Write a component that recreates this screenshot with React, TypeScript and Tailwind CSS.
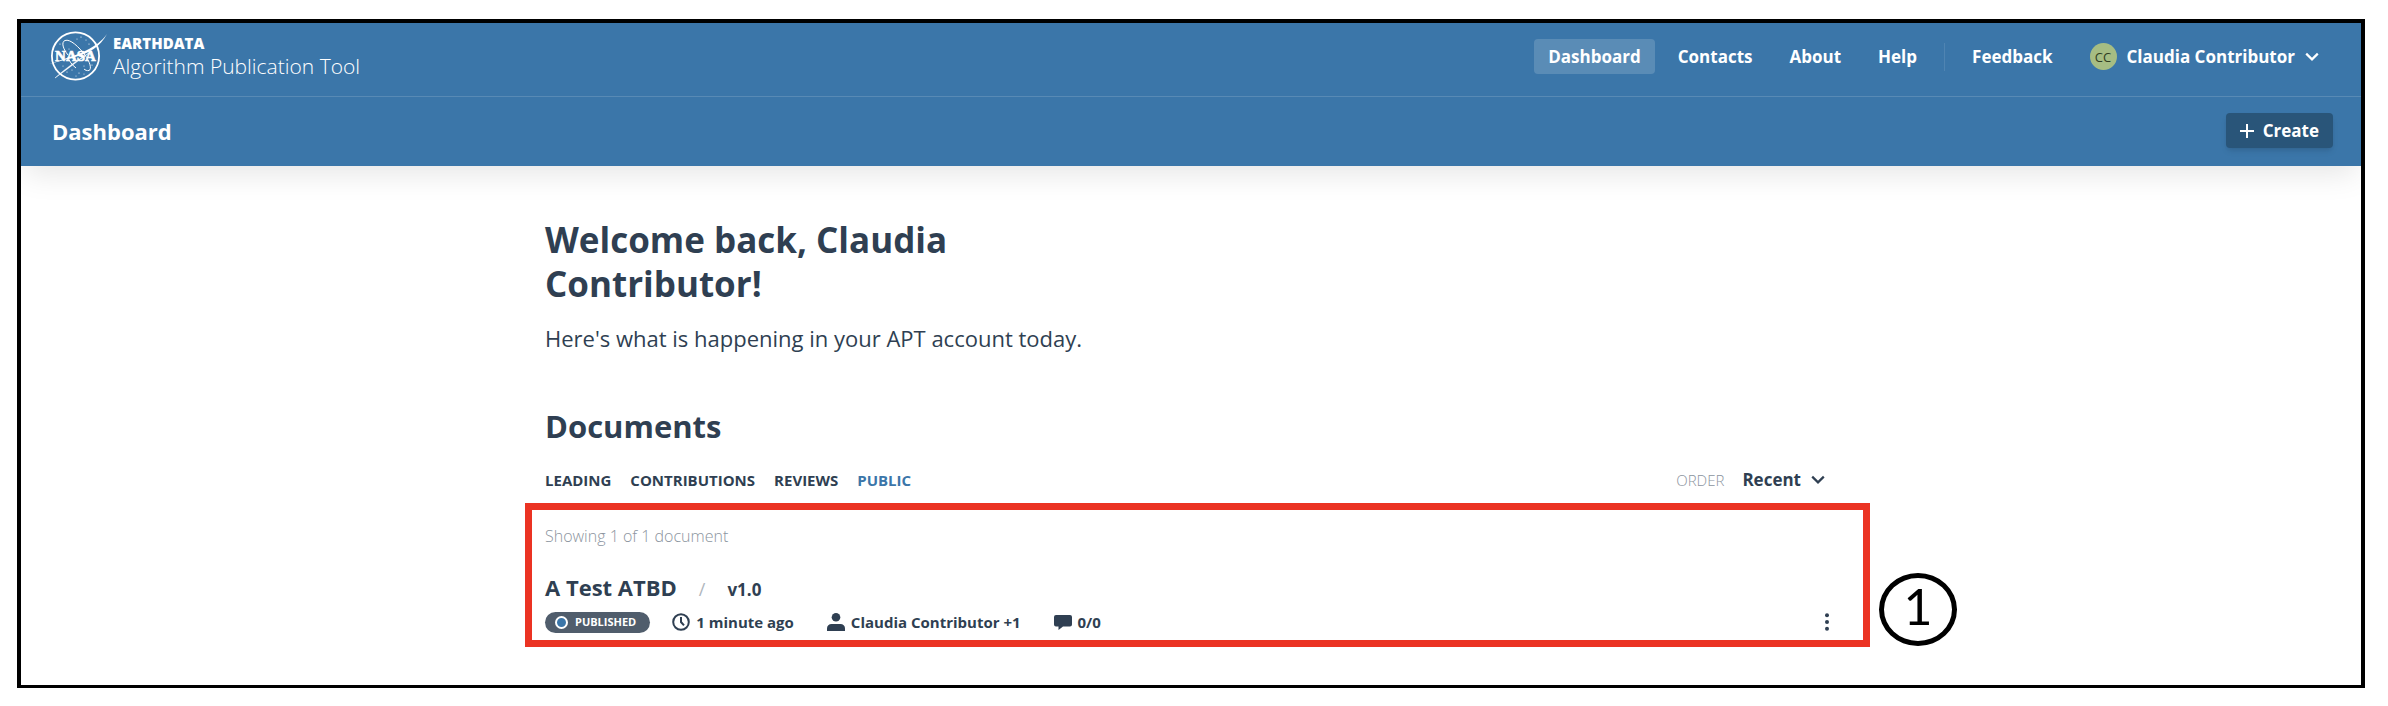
import type { ReactNode } from "react";

const navItem =
  "flex h-[35px] items-center rounded px-[14px] text-[17px] leading-6 font-bold whitespace-nowrap";

function NasaLogo() {
  return (
    <svg
      viewBox="0 0 60 52"
      className="h-[52px] w-[60px] shrink-0"
      fill="none"
      stroke="#fff"
      aria-hidden="true"
    >
      <circle cx="27.5" cy="26" r="23.6" strokeWidth="1.8" />
      <path
        d="M20 25C15 19 13 12 17 10.500C22 8.500 31 17 37 25C42 32 44 39 41 40.500C39 41 37 40 36 39"
        strokeWidth="1"
      />
      <path d="M20 27C21 31 24 35 28 38" strokeWidth="1" />
      <path d="M59 4C52 17 42 23 24 28L1 34C18 28 30 25 39 20C47 16 54 11 59 4Z" fill="#fff" stroke="none" />
      <path d="M7 48C17 39 29 30 44 21L30 31C22 37 14 43 7 48Z" fill="#fff" strokeWidth="0.5" />
      <g fill="#fff" stroke="none">
        <circle cx="33" cy="7" r="0.6" />
        <circle cx="38" cy="10" r="0.5" />
        <circle cx="41" cy="14" r="0.6" />
        <circle cx="29" cy="9" r="0.5" />
        <circle cx="12" cy="14" r="0.6" />
        <circle cx="21" cy="19" r="0.5" />
        <circle cx="15" cy="36" r="0.5" />
        <circle cx="19" cy="42" r="0.6" />
        <circle cx="24" cy="40" r="0.5" />
        <circle cx="31" cy="43" r="0.6" />
        <circle cx="36" cy="36" r="0.5" />
        <circle cx="44" cy="35" r="0.6" />
        <circle cx="28" cy="46" r="0.5" />
        <circle cx="36" cy="44" r="0.5" />
      </g>
      <text
        x="27.5"
        y="31"
        textAnchor="middle"
        fontFamily="Liberation Serif, serif"
        fontWeight="700"
        fontSize="15"
        fill="#fff"
        strokeWidth="0.6"
      >
        NASA
      </text>
    </svg>
  );
}

function Chevron() {
  return (
    <svg viewBox="0 0 14 10" className="h-[10px] w-[14px] shrink-0" fill="none" stroke="currentColor" strokeWidth="2.2" aria-hidden="true">
      <path d="M1.200 1.600 7 7.400l5.800-5.800" />
    </svg>
  );
}

function Meta({ icon, children }: { icon: ReactNode; children: ReactNode }) {
  return (
    <li className="flex items-center gap-[6px]">
      {icon}
      <span>{children}</span>
    </li>
  );
}

function Header() {
  return (
    <header className="relative bg-[#3b76a9] text-white shadow-[0_12px_28px_-4px_rgba(0,0,0,0.1)]">
      <div className="flex h-[74px] items-start justify-between border-b border-white/15 pr-7 pl-[27px]">
        <a href="#home" className="flex items-start pt-[7px]">
          <NasaLogo />
          <span className="flex flex-col pt-1 pl-[5px]">
            <strong className="text-[15px] leading-[18px] font-extrabold">EARTHDATA</strong>
            <span className="text-[21px] leading-7 font-light whitespace-nowrap">Algorithm Publication Tool</span>
          </span>
        </a>
        <nav aria-label="Main" className="flex items-center gap-[9px] pt-4">
          <a href="#dashboard" aria-current="page" className={`${navItem} bg-white/16`}>Dashboard</a>
          <a href="#contacts" className={navItem}>Contacts</a>
          <a href="#about" className={navItem}>About</a>
          <a href="#help" className={navItem}>Help</a>
          <span className="mx-1 h-7 w-px bg-white/10" />
          <a href="#feedback" className={navItem}>Feedback</a>
          <button type="button" className={`${navItem} gap-[10px]`}>
            <span className="flex size-[27px] items-center justify-center rounded-full bg-[#a6bd83] text-[13px] font-medium text-[#2f3d22]">CC</span>
            Claudia Contributor
            <Chevron />
          </button>
        </nav>
      </div>
      <div className="flex h-[69px] items-start justify-between pr-7 pl-[31px]">
        <h1 className="pt-[18px] text-[22px] leading-8 font-bold">Dashboard</h1>
        <button type="button" className="mt-4 flex h-[35px] items-center gap-[9px] rounded bg-[#295579] px-[14px] text-[17px] leading-6 font-bold shadow-md">
          <svg viewBox="0 0 14 14" className="size-[14px]" stroke="currentColor" strokeWidth="2" aria-hidden="true">
            <path d="M7 0v14M0 7h14" />
          </svg>
          Create
        </button>
      </div>
    </header>
  );
}

export default function App() {
  return (
    <div className="bg-white pt-[19px] pr-[23px] pb-[18px] pl-[17px] font-['Open_Sans',sans-serif] text-[#2f3f52]">
      <div className="overflow-hidden border-4 border-b-[3px] border-black">
        <Header />
        <main className="mx-auto max-w-[1292px] pt-[52px] pb-[38px]">
          <h2 className="max-w-[500px] text-[35px] leading-[44px] font-bold">Welcome back, Claudia Contributor!</h2>
          <p className="pt-[14px] text-[22px] leading-9">Here's what is happening in your APT account today.</p>
          <h3 className="pt-[50px] text-[31px] leading-10 font-bold">Documents</h3>
          <div className="flex items-center justify-between pt-[22px] pr-3">
            <nav aria-label="Document lists" className="flex gap-[19px] text-[15px] leading-6 font-bold">
              <a href="#leading">LEADING</a>
              <a href="#contributions">CONTRIBUTIONS</a>
              <a href="#reviews">REVIEWS</a>
              <a href="#public" aria-current="page" className="text-[#3b76a9]">PUBLIC</a>
            </nav>
            <div className="flex items-center">
              <label htmlFor="order" className="pr-[18px] text-[15px] leading-6 font-light text-[#8b949e]">ORDER</label>
              <select id="order" className="appearance-none bg-transparent pr-[10px] text-[17px] leading-6 font-bold [field-sizing:content]">
                <option>Recent</option>
              </select>
              <Chevron />
            </div>
          </div>
          <section aria-label="Public documents" className="relative mt-[11px] -mr-[33px] -ml-5 border-[7px] border-[#eb3323] pt-[14px] pr-[30px] pb-[6px] pl-[13px]">
            <p className="text-[16px] leading-6 font-light text-[#8b949e]">Showing 1 of 1 document</p>
            <div className="flex items-baseline pt-[23px]">
              <h4 className="text-[22px] leading-8 font-bold">A Test ATBD</h4>
              <span className="px-[22px] text-[18px] text-[#b0b6bd]">/</span>
              <span className="text-[17px] font-bold">v1.0</span>
            </div>
            <div className="flex items-center justify-between pt-[7px]">
              <ul className="flex items-center text-[15px] leading-6 font-bold">
                <li className="mr-[22px] flex h-[21px] items-center gap-[7px] rounded-full bg-[#505d6c] pr-[14px] pl-[10px] text-[11px] text-white">
                  <span className="size-[13px] rounded-full border-2 border-white bg-[#3b76a9]" />
                  PUBLISHED
                </li>
                <Meta icon={
                  <svg viewBox="0 0 18 18" className="size-[18px]" fill="none" stroke="currentColor" strokeWidth="2" aria-hidden="true">
                    <circle cx="9" cy="9" r="7.800" />
                    <path d="M9 4v5l3 3.400" />
                  </svg>
                }>1 minute ago</Meta>
                <li className="w-[33px]" aria-hidden="true" />
                <Meta icon={
                  <svg viewBox="0 0 18 18" className="size-[18px]" fill="currentColor" aria-hidden="true">
                    <circle cx="9" cy="4.300" r="4.300" />
                    <path d="M0 18v-2.500C0 12.500 2 11 4.500 11h9c2.500 0 4.500 1.500 4.500 4.500V18z" />
                  </svg>
                }>Claudia Contributor +1</Meta>
                <li className="w-[33px]" aria-hidden="true" />
                <Meta icon={
                  <svg viewBox="0 0 18 16" className="h-4 w-[18px]" fill="currentColor" aria-hidden="true">
                    <path d="M2 1h14a2 2 0 0 1 2 2v7.500a2 2 0 0 1-2 2H9L4.500 16v-3.500H2a2 2 0 0 1-2-2V3a2 2 0 0 1 2-2z" />
                  </svg>
                }>0/0</Meta>
              </ul>
              <button type="button" aria-label="Document options" className="px-1">
                <svg viewBox="0 0 4 18" className="h-[18px] w-1" fill="currentColor" aria-hidden="true">
                  <circle cx="2" cy="2.300" r="2" />
                  <circle cx="2" cy="9" r="2" />
                  <circle cx="2" cy="15.700" r="2" />
                </svg>
              </button>
            </div>
            <span className="absolute -right-[94px] -bottom-[6px] flex h-[73px] w-[78px] items-center justify-center rounded-[50%] border-[5px] border-black pb-2 font-[Lato] text-[50px] leading-none text-black">1</span>
          </section>
        </main>
      </div>
    </div>
  );
}
